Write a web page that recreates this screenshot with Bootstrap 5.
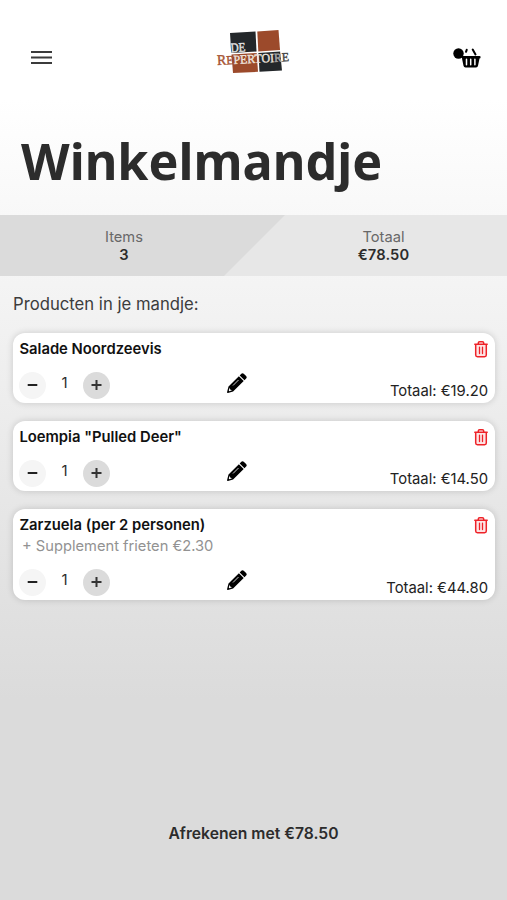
<!DOCTYPE html>
<html lang="nl">
<head>
<meta charset="utf-8">
<meta name="viewport" content="width=device-width, initial-scale=1">
<title>Winkelmandje</title>
<link href="https://cdn.jsdelivr.net/npm/bootstrap@5.3.0/dist/css/bootstrap.min.css" rel="stylesheet">
<style>
body{font-family:Inter,"Liberation Sans",sans-serif;font-size:14.7px;line-height:18px;color:#2c2c2c;background:linear-gradient(#fff 100px,#dbdbdb 700px) no-repeat #dbdbdb;height:900px;overflow:hidden}
.topbar{height:115px;padding:0 26px 0 31px}
.logo{margin-top:-13px;margin-left:2px}
.page-title{font:700 50.3px/68px "Noto Sans","Open Sans",sans-serif;padding:12px 0 0 21px;height:100px;color:#2c2c2c}
.summary{height:61px;background:#e7e7e7;position:relative}
.summary-shape{position:absolute;inset:0;width:100%;height:100%}
.summary-cell{position:relative;padding-top:13px}
.summary-items{width:248px}
.summary-total{padding-left:12px}
.summary-label{color:#686868}
.summary-value{font-weight:600;letter-spacing:.15px}
.intro{font-size:16.7px;line-height:22px;padding:17px 13px 18px;color:#3c3c3c}
.items{padding:0 12px 0 13px;gap:18px}
.item{height:70px;border:0;border-radius:12px;box-shadow:0 0 7px rgba(0,0,0,.16);padding:6px 7px 4px 6px}
.item-tall{height:91px}
.item-name{font-weight:600;font-size:14.8px;line-height:20px;color:#111;padding-left:.4px}
.extra{font-size:14.7px;line-height:23px;padding-left:3px;color:#929292;margin-bottom:-2px}
.trash{margin-top:1px}
.round{width:27px;height:27px;padding:0;border:0;background:#f5f5f5}
.round-plus{background:#dbdbdb}
.qty{width:37px;text-align:center;font-size:15px;line-height:22px}
.pen{margin:0 34px 6px 0}
.price{font-size:14.8px;line-height:20px;color:#222;margin-bottom:-2px}
.checkout{margin-top:214px;padding:0;border:0;font-size:15.7px;line-height:40px;font-weight:600;color:#2c2c2c}
</style>
<script src="https://cdn.jsdelivr.net/npm/bootstrap@5.3.0/dist/js/bootstrap.bundle.min.js"></script>
</head>
<body>
<svg class="d-none" aria-hidden="true">
<symbol id="trash" viewBox="0 0 14 18"><path d="M1.700 4.500h10.600v12H1.700Z" fill="#fde4e4"/><path d="M.8 4.200h12.400M4.300 4V3q0-1.300 1.300-1.300h2.800q1.300 0 1.300 1.300v1M1.700 4.300v10.700q0 1.700 1.700 1.700h7.200q1.700 0 1.700-1.700V4.300" fill="none" stroke="#ee2228" stroke-width="1.500" stroke-linecap="round"/><path d="M5.500 7.200v6.300M8.500 7.200v6.300" stroke="#ee2228" stroke-width="1.300" stroke-linecap="round"/></symbol>
<symbol id="pencil" viewBox="0 0 20 20"><path d="M14.300.8Q15.700-.4 17 .9L19.100 3Q20.300 4.300 19.100 5.600L17.500 7.200 12.700 2.400ZM11.900 3.200 16.700 8 6.100 18.500.9 19.900Q-.2 20 .1 18.900L1.500 13.600Z"/><path d="M6 12.500 11.500 7" stroke="#fff" stroke-width=".8"/><path d="M2.500 14.800 3.200 16.500 5 17.200 2.400 18.200 1.800 17.700Z" fill="#fff"/></symbol>
<symbol id="minus" viewBox="0 0 27 27"><path d="M8.700 13h9.600" stroke="#222" stroke-width="2"/></symbol>
<symbol id="plus" viewBox="0 0 27 27"><path d="M8.500 13h10M13.500 8v10" stroke="#333" stroke-width="2"/></symbol>
</svg>
<header class="topbar d-flex align-items-center justify-content-between">
<svg width="21" height="14" viewBox="0 0 21 14" role="img" aria-label="Menu"><path d="M0 1h21M0 6.500h21M0 12h21" stroke="#3b3b3b" stroke-width="2"/></svg>
<svg class="logo" width="76" height="48" viewBox="0 0 76 48" role="img" aria-label="De Repertoire">
<g><path d="M14 6 39.500 4.500 40.500 24.500 15.200 26Z" fill="#23272a"/><path d="M41.300 4.400 62.500 3 64 23 42.300 24.500Z" fill="#9c4a2b"/><path d="M15.500 27.500 40.700 26 42 44.800 17 46Z" fill="#9c4a2b"/><path d="M42.400 26 64.100 24.600 66 43.400 43.500 44.700Z" fill="#23272a"/></g>
<g font-family="Liberation Serif,serif" transform="rotate(-3 38 30)" stroke-width=".4"><text x="15" y="24" font-size="13" fill="#e4e4e4" stroke="#e4e4e4" textLength="15" lengthAdjust="spacingAndGlyphs">DE</text><text x="1" y="36" font-size="12.500" fill="#a65231" stroke="#a65231" textLength="72" lengthAdjust="spacingAndGlyphs"><tspan font-size="14.500">R</tspan><tspan>E</tspan><tspan fill="#eee4df" stroke="#eee4df">PERTOI</tspan><tspan fill="#aaa" stroke="#aaa">R</tspan><tspan fill="#444" stroke="#444">E</tspan></text></g></svg>
<svg width="28" height="21" viewBox="0 0 28 21" role="img" aria-label="Winkelmand"><circle cx="5.500" cy="6.500" r="5.200"/><path d="M13.700 2.800 13 4.800M19.700 2.500 22.500 7.500" stroke="#000" stroke-width="2" stroke-linecap="round"/><path d="M8.700 9H26.500Q27.700 9 27.600 10.200T26.500 11.500L25 18.800Q24.700 20.500 23 20.500H12.500Q10.800 20.500 10.500 18.800L9.200 12.500Z"/><path d="M13.500 12.300v5.400M17.700 12.300v5.400M21.900 12.300v5.400" stroke="#fff" stroke-width="1.500" stroke-linecap="round"/></svg>
</header>
<h1 class="page-title m-0">Winkelmandje</h1>
<section class="summary d-flex text-center">
<svg class="summary-shape" viewBox="0 0 507 61" preserveAspectRatio="none"><path d="M0 0H285L224 61H0Z" fill="#dbdbdb"/></svg>
<div class="summary-cell summary-items"><div class="summary-label">Items</div><div class="summary-value">3</div></div>
<div class="summary-cell summary-total flex-grow-1"><div class="summary-label">Totaal</div><div class="summary-value">€78.50</div></div>
</section>
<p class="intro m-0">Producten in je mandje:</p>
<main class="items d-flex flex-column">
<article class="item card justify-content-between">
<div class="d-flex justify-content-between"><div class="item-name">Salade Noordzeevis</div><svg class="trash" width="14" height="18"><use href="#trash"/></svg></div>
<div class="row g-0 align-items-end"><div class="col d-flex"><button class="btn round rounded-circle d-flex" aria-label="Minder"><svg width="27" height="27"><use href="#minus"/></svg></button><span class="qty">1</span><button class="btn round round-plus rounded-circle d-flex" aria-label="Meer"><svg width="27" height="27"><use href="#plus"/></svg></button></div><svg class="col-auto pen" width="20" height="20"><use href="#pencil"/></svg><div class="col price text-end">Totaal: €19.20</div></div>
</article>
<article class="item card justify-content-between">
<div class="d-flex justify-content-between"><div class="item-name">Loempia "Pulled Deer"</div><svg class="trash" width="14" height="18"><use href="#trash"/></svg></div>
<div class="row g-0 align-items-end"><div class="col d-flex"><button class="btn round rounded-circle d-flex" aria-label="Minder"><svg width="27" height="27"><use href="#minus"/></svg></button><span class="qty">1</span><button class="btn round round-plus rounded-circle d-flex" aria-label="Meer"><svg width="27" height="27"><use href="#plus"/></svg></button></div><svg class="col-auto pen" width="20" height="20"><use href="#pencil"/></svg><div class="col price text-end">Totaal: €14.50</div></div>
</article>
<article class="item item-tall card justify-content-between">
<div class="d-flex justify-content-between"><div><div class="item-name">Zarzuela (per 2 personen)</div><div class="extra">+ Supplement frieten €2.30</div></div><svg class="trash" width="14" height="18"><use href="#trash"/></svg></div>
<div class="row g-0 align-items-end"><div class="col d-flex"><button class="btn round rounded-circle d-flex" aria-label="Minder"><svg width="27" height="27"><use href="#minus"/></svg></button><span class="qty">1</span><button class="btn round round-plus rounded-circle d-flex" aria-label="Meer"><svg width="27" height="27"><use href="#plus"/></svg></button></div><svg class="col-auto pen" width="20" height="20"><use href="#pencil"/></svg><div class="col price text-end">Totaal: €44.80</div></div>
</article>
</main>
<button class="btn checkout d-block w-100">Afrekenen met €78.50</button>
</body>
</html>
